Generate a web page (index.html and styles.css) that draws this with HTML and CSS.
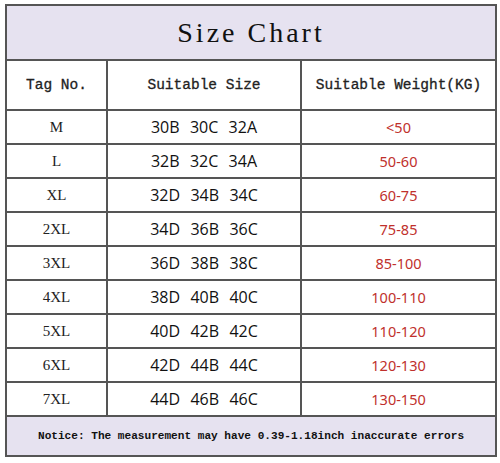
FILE: index.html
```html
<!DOCTYPE html>
<html>
<head>
<meta charset="utf-8">
<link rel="stylesheet" href="styles.css">
</head>
<body>
<table class="chart">
  <colgroup><col class="c1"><col class="c2"><col class="c3"></colgroup>
  <tr class="title-row"><td colspan="3" class="title">Size Chart</td></tr>
  <tr class="head-row"><th>Tag No.</th><th>Suitable Size</th><th>Suitable Weight(KG)</th></tr>
  <tr class="row"><td class="tag">M</td><td class="size">30B&nbsp; 30C&nbsp; 32A</td><td class="weight">&lt;50</td></tr>
  <tr class="row"><td class="tag">L</td><td class="size">32B&nbsp; 32C&nbsp; 34A</td><td class="weight">50-60</td></tr>
  <tr class="row"><td class="tag">XL</td><td class="size">32D&nbsp; 34B&nbsp; 34C</td><td class="weight">60-75</td></tr>
  <tr class="row"><td class="tag">2XL</td><td class="size">34D&nbsp; 36B&nbsp; 36C</td><td class="weight">75-85</td></tr>
  <tr class="row"><td class="tag">3XL</td><td class="size">36D&nbsp; 38B&nbsp; 38C</td><td class="weight">85-100</td></tr>
  <tr class="row"><td class="tag">4XL</td><td class="size">38D&nbsp; 40B&nbsp; 40C</td><td class="weight">100-110</td></tr>
  <tr class="row"><td class="tag">5XL</td><td class="size">40D&nbsp; 42B&nbsp; 42C</td><td class="weight">110-120</td></tr>
  <tr class="row"><td class="tag">6XL</td><td class="size">42D&nbsp; 44B&nbsp; 44C</td><td class="weight">120-130</td></tr>
  <tr class="row"><td class="tag">7XL</td><td class="size">44D&nbsp; 46B&nbsp; 46C</td><td class="weight">130-150</td></tr>
  <tr class="notice-row"><td colspan="3" class="notice">Notice: The measurement may have 0.39-1.18inch inaccurate errors</td></tr>
</table>
</body>
</html>
```
FILE: styles.css
```css
html, body {
  margin: 0;
  padding: 0;
  background: #ffffff;
}
body {
  padding: 4px 5px 0 5px;
}
.chart {
  border-collapse: collapse;
  width: 490px;
  table-layout: fixed;
  border: 2px solid #505050;
  color: #1a1a1a;
}
.c1 { width: 101px; }
.c2 { width: 194px; }
.c3 { width: 195px; }
.chart td, .chart th {
  border: 2px solid #555555;
  padding: 0;
  text-align: center;
  vertical-align: middle;
}
.title-row { height: 55px; }
.title {
  background: #e6e2f0;
  font-family: "Liberation Serif", serif;
  font-size: 28px;
  letter-spacing: 3px;
  color: #111;
  padding-top: 4px;
}
.head-row { height: 50px; }
.head-row th {
  font-family: "Liberation Mono", monospace;
  font-size: 14.5px;
  font-weight: normal;
  -webkit-text-stroke: 0.3px #222;
  color: #222;
}
.row { height: 34px; }
.tag {
  font-family: "Liberation Serif", serif;
  font-size: 15px;
  color: #222;
}
.size {
  font-family: "Open Sans", "Noto Sans", sans-serif;
  font-size: 16px;
  color: #111;
  word-spacing: 1px;
}
.weight {
  font-family: "Noto Sans", sans-serif;
  font-size: 14.5px;
  color: #c0302c;
}
.notice-row { height: 40px; }
.notice {
  background: #e6e2f0;
  font-family: "Liberation Mono", monospace;
  font-size: 11.1px;
  font-weight: bold;
  color: #111;
}
```
